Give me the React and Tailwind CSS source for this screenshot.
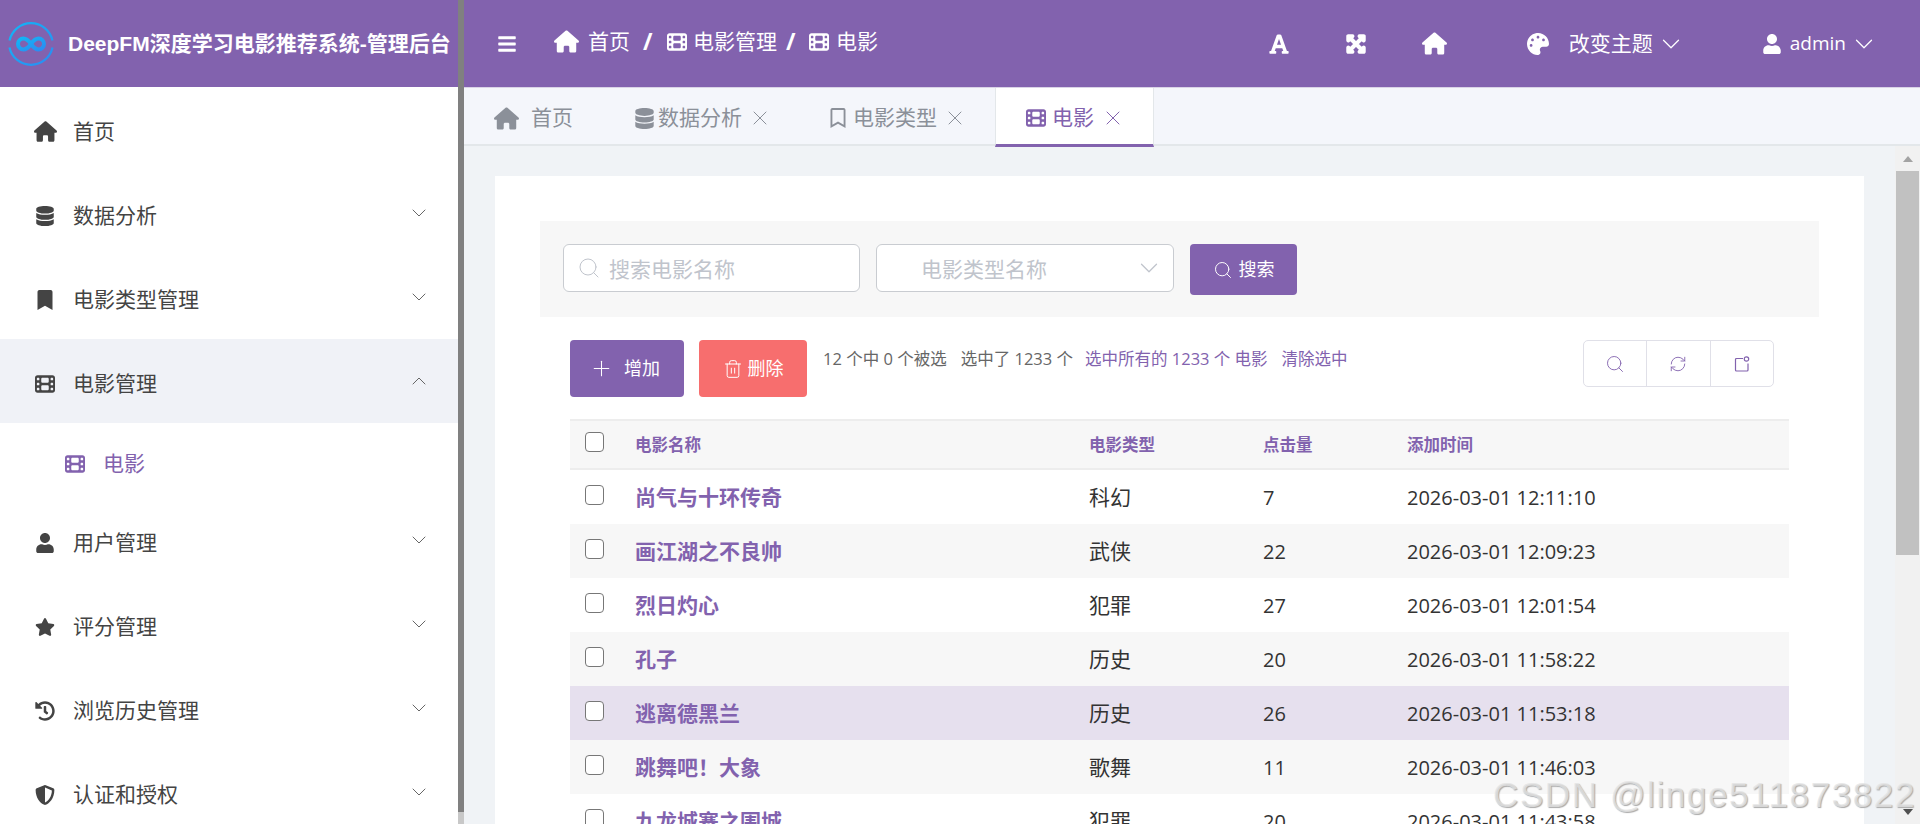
import { ChevronDown, ChevronUp, Plus, RefreshCw, Search, Trash2, X } from "lucide-react";
import {
  FaBars,
  FaBookmark,
  FaDatabase,
  FaExpandArrowsAlt,
  FaFont,
  FaHistory,
  FaPalette,
  FaRegBookmark,
  FaShieldAlt,
  FaStar,
  FaUser,
} from "react-icons/fa";
import { FaFilm, FaHouse } from "react-icons/fa6";

const menu = [
  { icon: FaHouse, label: "首页", nudge: true, size: 23 },
  { icon: FaDatabase, label: "数据分析", arrow: true, nudge: true },
  { icon: FaBookmark, label: "电影类型管理", arrow: true, nudge: true },
  { icon: FaFilm, label: "电影管理", open: true, nudge: true },
  { icon: FaUser, label: "用户管理", arrow: true },
  { icon: FaStar, label: "评分管理", arrow: true },
  { icon: FaHistory, label: "浏览历史管理", arrow: true },
  { icon: FaShieldAlt, label: "认证和授权", arrow: true },
];

const movies = [
  { name: "尚气与十环传奇", type: "科幻", clicks: 7, time: "2026-03-01 12:11:10", bg: "bg-white" },
  { name: "画江湖之不良帅", type: "武侠", clicks: 22, time: "2026-03-01 12:09:23", bg: "bg-[#f7f7f7]" },
  { name: "烈日灼心", type: "犯罪", clicks: 27, time: "2026-03-01 12:01:54", bg: "bg-white" },
  { name: "孔子", type: "历史", clicks: 20, time: "2026-03-01 11:58:22", bg: "bg-[#f7f7f7]" },
  { name: "逃离德黑兰", type: "历史", clicks: 26, time: "2026-03-01 11:53:18", bg: "bg-[#e6e0ee]" },
  { name: "跳舞吧\uFF01大象", type: "歌舞", clicks: 11, time: "2026-03-01 11:46:03", bg: "bg-[#f7f7f7]" },
  { name: "九龙城寨之围城", type: "犯罪", clicks: 20, time: "2026-03-01 11:43:58", bg: "bg-white" },
];

function Logo() {
  return (
    <svg width="46" height="46" viewBox="0 0 46 46" fill="none" className="shrink-0">
      <defs>
        <linearGradient id="logoBlue" x1="0" y1="0" x2="1" y2="1">
          <stop offset="0" stopColor="#12b6f6" />
          <stop offset="1" stopColor="#2b8cf2" />
        </linearGradient>
      </defs>
      <path d="M1.500 19.500A22 22 0 0 1 44.500 19.500M44.500 26.500A22 22 0 0 1 1.500 26.500" stroke="url(#logoBlue)" strokeWidth="2.200" />
      <path
        d="M23 23c-2.500-3.500-4.500-5.500-7.500-5.500a5.500 5.500 0 0 0 0 11c3 0 5-2 7.500-5.500c2.500-3.500 4.500-5.500 7.500-5.500a5.500 5.500 0 0 1 0 11c-3 0-5-2-7.500-5.500z"
        stroke="url(#logoBlue)"
        strokeWidth="4"
      />
    </svg>
  );
}

function Checkbox() {
  return <span className="block w-[19px] h-[20px] rounded-[4px] border-[1.5px] border-[#777] bg-white" />;
}

function CornerIcon() {
  return (
    <svg width="16" height="16" viewBox="0 0 16 16" fill="none" stroke="#8262ae" strokeWidth="1.200">
      <path d="M9 2.500H2.500a1 1 0 0 0-1 1V14a1 1 0 0 0 1 1H13a1 1 0 0 0 1-1V7.500" />
      <circle cx="12.500" cy="3" r="2.200" />
    </svg>
  );
}

export default function App() {
  return (
    <div className="relative flex w-[1920px] h-[824px] overflow-hidden bg-white font-['Open_Sans','Noto_Sans_CJK_SC',sans-serif] text-[#444]">
      {/* Sidebar */}
      <aside className="w-[458px] shrink-0 flex flex-col">
        <div className="h-[87px] shrink-0 bg-[#8262ae] flex items-center pl-[8px] text-white">
          <Logo />
          <span className="ml-[14px] text-[21px] font-bold whitespace-nowrap font-['Liberation_Sans','Noto_Sans_CJK_SC',sans-serif]">
            DeepFM深度学习电影推荐系统-管理后台
          </span>
        </div>
        <nav>
          {menu.map((item) => (
            <div key={item.label}>
              <div
                className={`h-[84px] flex items-center pl-[35px] pr-[27px] text-[21px] ${item.open ? "bg-[#f0f2f7]" : ""} ${item.nudge ? "pt-[5px]" : ""}`}
              >
                <span className="w-[20px] shrink-0 flex justify-center text-[#444]">
                  <item.icon size={item.size || 20} className="shrink-0" />
                </span>
                <span className="ml-[18px] flex-1">{item.label}</span>
                {item.arrow && <ChevronDown size={24} strokeWidth={1} className="-mt-[6px] text-[#666]" />}
                {item.open && <ChevronUp size={24} strokeWidth={1} className="-mt-[6px] text-[#666]" />}
              </div>
              {item.open && (
                <div className="h-[78px] flex items-center pl-[65px] pt-[3px] text-[21px] text-[#8262ae]">
                  <FaFilm size={20} className="shrink-0" />
                  <span className="ml-[18px]">电影</span>
                </div>
              )}
            </div>
          ))}
        </nav>
      </aside>

      {/* Sidebar scrollbar */}
      <div className="w-[6px] shrink-0 flex flex-col bg-[#c8c8c8]">
        <div className="h-[812px] bg-[#808080]" />
      </div>

      <div className="flex-1 min-w-0 flex flex-col">
        {/* Top bar */}
        <header className="h-[87px] shrink-0 bg-[#8262ae] flex items-center text-white">
          <FaBars size={20} className="ml-[33px] shrink-0" />
          <div className="flex items-center text-[21px] ml-[37px] -mt-[4px]">
            <FaHouse size={25} />
            <span className="ml-[9px]">首页</span>
            <span className="ml-[13px] w-[9px] text-[23px] font-bold">/</span>
            <FaFilm size={20} className="ml-[15px]" />
            <span className="ml-[6px]">电影管理</span>
            <span className="ml-[9px] w-[9px] text-[23px] font-bold">/</span>
            <FaFilm size={20} className="ml-[14px]" />
            <span className="ml-[7px]">电影</span>
          </div>
          <div className="flex-1" />
          <FaFont size={22} />
          <FaExpandArrowsAlt size={20} stroke="currentColor" strokeWidth={50} className="ml-[56px]" />
          <FaHouse size={25} className="ml-[56px]" />
          <FaPalette size={22} className="ml-[80px]" />
          <span className="ml-[20px] text-[21px]">改变主题</span>
          <ChevronDown size={30} strokeWidth={1} className="ml-[3px]" />
          <FaUser size={20} className="ml-[76px]" />
          <span className="ml-[8px] text-[19px]">admin</span>
          <ChevronDown size={30} strokeWidth={1} className="ml-[3px] mr-[41px]" />
        </header>

        {/* Tabs */}
        <div className="h-[59px] shrink-0 bg-[#f4f6fb] border-t border-[#d9d3e6] border-b-2 border-b-[#e3e7ea] flex items-start">
          <div className="flex items-center h-[56px] pl-[30px] pt-[4px] text-[21px] text-[#8b9099]">
            <FaHouse size={25} className="shrink-0" />
            <span className="ml-[12px]">首页</span>
            <FaDatabase size={21} className="ml-[61px] shrink-0" />
            <span className="ml-[3px]">数据分析</span>
            <X size={24} strokeWidth={1} className="ml-[6px]" />
            <FaRegBookmark size={20} className="ml-[56px] shrink-0" />
            <span className="ml-[5px]">电影类型</span>
            <X size={24} strokeWidth={1} className="ml-[6px]" />
          </div>
          <div className="relative z-10 ml-[28px] w-[159px] h-[59px] shrink-0 bg-white border-x border-[#e3e7ea] border-b-[3px] border-b-[#8262ae] flex items-center pl-[30px] pt-[3px] text-[21px] text-[#8262ae]">
            <FaFilm size={20} className="shrink-0" />
            <span className="ml-[6px]">电影</span>
            <X size={24} strokeWidth={1} className="ml-[7px]" />
          </div>
        </div>

        {/* Content */}
        <div className="flex-1 min-h-0 flex bg-[#f0f3f6]">
          <div className="flex-1 min-w-0 pl-[31px] pr-[31px] pt-[30px]">
            <div className="h-full bg-white pl-[45px] pr-[45px] pt-[45px] overflow-hidden">
              {/* Filter bar */}
              <div className="h-[96px] bg-[#f7f7f7] flex items-start pt-[23px] pl-[23px]">
                <div className="w-[297px] h-[48px] rounded-[6px] border border-[#c9ccd1] bg-white flex items-center pl-[13px] text-[21px] text-[#c0c4cc]">
                  <Search size={24} strokeWidth={1} />
                  <span className="ml-[8px] pt-[3px]">搜索电影名称</span>
                </div>
                <div className="ml-[16px] w-[298px] h-[48px] rounded-[6px] border border-[#c9ccd1] bg-white flex items-center pl-[44px] pr-[9px] text-[21px] text-[#c0c4cc]">
                  <span className="flex-1 pt-[3px]">电影类型名称</span>
                  <ChevronDown size={30} strokeWidth={1} />
                </div>
                <button className="ml-[16px] w-[107px] h-[51px] rounded-[4px] bg-[#8262ae] text-white flex items-center justify-center text-[18px]">
                  <Search size={20} strokeWidth={1.200} />
                  <span className="ml-[6px]">搜索</span>
                </button>
              </div>

              {/* Actions */}
              <div className="ml-[30px] mt-[23px] h-[57px] flex items-start text-[16.500px]">
                <button className="w-[114px] h-[57px] rounded-[4px] bg-[#8262ae] text-white flex items-center pl-[19px] text-[18px]">
                  <Plus size={25} strokeWidth={1} />
                  <span className="ml-[10px]">增加</span>
                </button>
                <button className="ml-[15px] w-[108px] h-[57px] rounded-[4px] bg-[#f76e6e] text-white flex items-center justify-center text-[18px]">
                  <Trash2 size={20} strokeWidth={1.200} />
                  <span className="ml-[5px]">删除</span>
                </button>
                <span className="ml-[16px] mt-[7px] text-[#666]">12 个中 0 个被选</span>
                <span className="ml-[14px] mt-[7px] text-[#666]">选中了 1233 个</span>
                <span className="ml-[12px] mt-[7px] text-[#8262ae]">选中所有的 1233 个 电影</span>
                <span className="ml-[14px] mt-[7px] text-[#8262ae]">清除选中</span>
                <div className="ml-auto mr-[45px] w-[191px] h-[47px] rounded-[5px] border border-[#e0e0e8] flex text-[#8262ae]">
                  <div className="flex-1 flex items-center justify-center border-r border-[#e0e0e8]">
                    <Search size={20} strokeWidth={1.100} />
                  </div>
                  <div className="flex-1 flex items-center justify-center border-r border-[#e0e0e8]">
                    <RefreshCw size={18} strokeWidth={1.200} />
                  </div>
                  <div className="flex-1 flex items-center justify-center">
                    <CornerIcon />
                  </div>
                </div>
              </div>

              {/* Table */}
              <table className="ml-[30px] mt-[22px] w-[1219px] table-fixed">
                <thead>
                  <tr className="h-[49px] bg-[#f7f7f7] border-y-2 border-[#ededed] text-[16.500px] font-bold text-[#8262ae] text-left">
                    <th className="w-[65px] pl-[15px] pb-[5px]">
                      <Checkbox />
                    </th>
                    <th className="w-[454px] pt-[2px]">电影名称</th>
                    <th className="w-[174px] pt-[2px]">电影类型</th>
                    <th className="w-[144px] pt-[2px]">点击量</th>
                    <th className="pt-[2px]">添加时间</th>
                  </tr>
                </thead>
                <tbody>
                  {movies.map((m, i) => (
                    <tr key={m.name} className={`${i === 0 ? "h-[55px]" : "h-[54px]"} ${m.bg}`}>
                      <td className="pl-[15px] pb-[5px]">
                        <Checkbox />
                      </td>
                      <td className="pt-[2px] text-[21px] font-bold text-[#8262ae]">{m.name}</td>
                      <td className="pt-[2px] text-[21px] text-[#333]">{m.type}</td>
                      <td className="pt-[2px] text-[20px] text-[#333]">{m.clicks}</td>
                      <td className="pt-[2px] text-[20px] text-[#333]">{m.time}</td>
                    </tr>
                  ))}
                </tbody>
              </table>
            </div>
          </div>

          {/* Page scrollbar */}
          <div className="w-[25px] shrink-0 flex flex-col bg-[#f1f1f1]">
            <div className="h-[25px] flex items-center justify-center">
              <span className="w-0 h-0 border-x-[5.500px] border-x-transparent border-b-[6px] border-b-[#a3a3a3]" />
            </div>
            <div className="h-[384px] bg-[#c1c1c1] mx-[1px]" />
            <div className="flex-1 flex items-end justify-center pb-[9px]">
              <span className="w-0 h-0 border-x-[5.500px] border-x-transparent border-t-[6px] border-t-[#505050]" />
            </div>
          </div>
        </div>
      </div>

      {/* CSDN watermark */}
      <div className="absolute right-[4px] bottom-[12px] text-[35px] tracking-[1.600px] leading-none whitespace-nowrap text-[#e4e4e4]/80 font-['Liberation_Sans',sans-serif] [text-shadow:1px_1px_1px_#aaaaaa]">
        CSDN @linge511873822
      </div>
    </div>
  );
}
